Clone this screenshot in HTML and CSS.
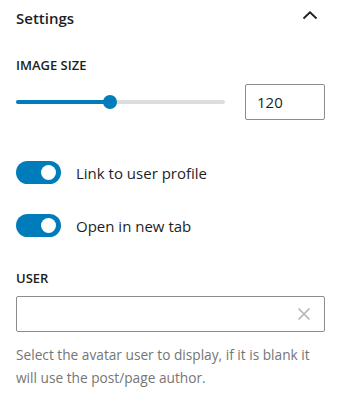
FILE: index.html
```html
<!DOCTYPE html>
<html>
<head>
<meta charset="utf-8">
<link rel="stylesheet" href="styles.css">
</head>
<body>
<div class="panel">
  <div class="panel-header">
    <span class="panel-title">Settings</span>
    <svg class="chevron" width="24" height="24" viewBox="0 0 24 24"><path d="M5.5 12.5 L12 6.3 L18.5 12.5" fill="none" stroke="#1e1e1e" stroke-width="1.8"/></svg>
  </div>
  <div class="field-label first">IMAGE SIZE</div>
  <div class="range-row">
    <div class="range-track">
      <div class="range-fill" style="width:45%"></div>
      <div class="range-thumb" style="left:45%"></div>
    </div>
    <div class="number-input">120</div>
  </div>
  <div class="toggle-row first-toggle">
    <span class="toggle"><span class="knob"></span></span>
    <span class="toggle-label">Link to user profile</span>
  </div>
  <div class="toggle-row second-toggle">
    <span class="toggle"><span class="knob"></span></span>
    <span class="toggle-label">Open in new tab</span>
  </div>
  <div class="field-label user">USER</div>
  <div class="text-input">
    <svg class="clear" width="14" height="14" viewBox="0 0 14 14"><path d="M1.5 1.5 L12.5 12.5 M12.5 1.5 L1.5 12.5" stroke="#b4b4b4" stroke-width="1.6" fill="none"/></svg>
  </div>
  <p class="help">Select the avatar user to display, if it is blank it will use the post/page author.</p>
</div>
</body>
</html>
```
FILE: styles.css
```css
* { box-sizing: border-box; }
body {
  margin: 0;
  background: #fff;
  font-family: "Open Sans", "Noto Sans", sans-serif;
  color: #1e1e1e;
}
.panel {
  width: 343px;
  padding: 8px 18px 0 16px;
}
.panel-header {
  display: flex;
  justify-content: space-between;
  align-items: center;
  height: 20px;
}
.panel-title {
  font-size: 15px;
  font-weight: 600;
  line-height: 20px;
}
.chevron {
  margin-right: 3px;
}
.field-label {
  font-size: 13px;
  font-weight: 600;
  line-height: 16px;
  text-transform: uppercase;
}
.field-label.first { margin-top: 29px; }
.field-label.user { margin-top: 33px; }
.range-row {
  margin-top: 11px;
  display: flex;
  align-items: center;
  gap: 20px;
  height: 36px;
}
.range-track {
  position: relative;
  flex: 1;
  height: 4px;
  background: #dddddd;
  border-radius: 2px;
}
.range-fill {
  height: 4px;
  background: #007cba;
  border-radius: 2px;
}
.range-thumb {
  position: absolute;
  top: -5px;
  width: 14px;
  height: 14px;
  margin-left: -7px;
  border-radius: 50%;
  background: #007cba;
}
.number-input {
  width: 80px;
  height: 36px;
  border: 1px solid #8c8c8c;
  border-radius: 2px;
  padding-left: 11px;
  font-size: 15px;
  line-height: 34px;
}
.toggle-row {
  display: flex;
  align-items: center;
  height: 23px;
}
.first-toggle { margin-top: 41px; }
.second-toggle { margin-top: 30px; }
.toggle {
  position: relative;
  width: 45px;
  height: 23px;
  border-radius: 12px;
  background: #007cba;
  flex: none;
}
.knob {
  position: absolute;
  top: 4px;
  right: 5px;
  width: 15px;
  height: 15px;
  border-radius: 50%;
  background: #fff;
}
.toggle-label {
  margin-left: 15px;
  font-size: 15px;
  line-height: 20px;
}
.text-input {
  margin-top: 10px;
  height: 36px;
  border: 1px solid #8c8c8c;
  border-radius: 2px;
  display: flex;
  align-items: center;
  justify-content: flex-end;
  padding-right: 13px;
}
.help {
  margin: 11px 0 0;
  font-size: 13.7px;
  line-height: 23px;
  color: #757575;
}
```
